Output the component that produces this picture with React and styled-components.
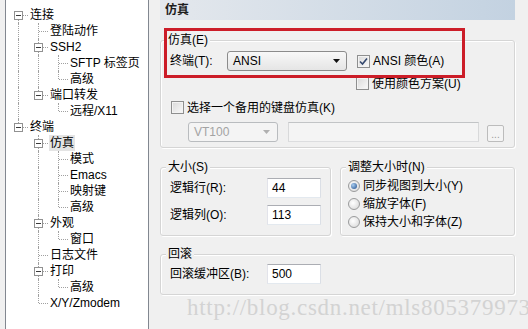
import React from 'react';
import styled, { createGlobalStyle } from 'styled-components';

const GlobalStyle = createGlobalStyle`
  html, body { margin: 0; padding: 0; background: #f0f0f0; }
  body {
    font-family: "Liberation Sans", "Noto Sans CJK SC", sans-serif;
    font-size: 12px;
    color: #000;
  }
  * { box-sizing: border-box; }
`;

const Window = styled.div`
  position: relative;
  width: 528px;
  height: 329px;
  overflow: hidden;
  display: flex;
  align-items: flex-start;
  background: #f0f0f0;
`;

/* ---------- tree ---------- */
const TreePanel = styled.div`
  margin-left: 5px;
  width: 144px;
  height: 340px;
  flex: none;
  background: #fff;
  border-left: 1px solid #828790;
  border-right: 1px solid #828790;
  padding: 7px 0 0 2px;
`;

const TreeRow = styled.div`
  display: flex;
  align-items: center;
  height: 16px;
  white-space: nowrap;
`;

const Cell = styled.span`
  position: relative;
  width: 20px;
  height: 16px;
  flex: none;
  &::before {
    content: '';
    position: absolute;
    left: 10px;
    top: ${p => (p.$up ? '0' : '8px')};
    bottom: ${p => (p.$down ? '0' : '8px')};
    border-left: ${p => (p.$up || p.$down ? '1px dotted #a0a0a0' : 'none')};
  }
  &::after {
    content: '';
    position: absolute;
    left: 11px;
    right: 0;
    top: 8px;
    border-top: ${p => (p.$h ? '1px dotted #a0a0a0' : 'none')};
  }
`;

const Expander = styled.svg`
  position: absolute;
  left: 6px;
  top: 4px;
  z-index: 1;
`;

const NodeLabel = styled.span`
  margin-left: 1px;
  padding: 0 1px;
  height: 16px;
  line-height: 16px;
  background: ${p => (p.$sel ? '#e4e4e4' : 'transparent')};
`;

/* ---------- right side ---------- */
const Main = styled.div`
  margin-left: 11px;
  width: 355px;
  flex: none;
  display: flex;
  flex-direction: column;
`;

const Header = styled.div`
  height: 20px;
  line-height: 20px;
  padding-left: 5px;
  font-weight: bold;
  color: #1e1e1e;
  background: linear-gradient(to right, #e4e8ed, #c3d2e1);
`;

const Group = styled.fieldset`
  margin: ${p => p.$mt || 0}px 0 0 0;
  padding: 0 0 0 5px;
  min-width: 0;
  border: 1px solid #d5d5d5;
  border-radius: 3px;
  box-shadow: inset 1px 1px 0 #fff, 1px 1px 0 #fff;
  flex: ${p => (p.$w ? `0 0 ${p.$w}px` : 'none')};
`;

const Legend = styled.legend`
  padding: 0 2px;
  line-height: 14px;
  background: #f0f0f0;
`;

const Body = styled.div`
  display: flex;
  flex-direction: column;
  padding: 0 0 ${p => p.$pb}px ${p => p.$pl}px;
`;

const Row = styled.div`
  display: flex;
  align-items: center;
  height: ${p => p.$h}px;
  margin-top: ${p => p.$mt || 0}px;
  margin-left: ${p => p.$ml || 0}px;
`;

const FieldLabel = styled.span`
  width: ${p => p.$w}px;
  flex: none;
  line-height: 14px;
`;

const Combo = styled.div`
  width: ${p => p.$w}px;
  height: 20px;
  flex: none;
  display: flex;
  align-items: center;
  justify-content: space-between;
  padding: 0 ${p => (p.$disabled ? 7 : 6)}px 0 5px;
  border: 1px solid ${p => (p.$disabled ? '#b9bcbf' : '#8b8b8b')};
  border-radius: 3px;
  background: ${p => (p.$disabled ? '#f4f4f4' : 'linear-gradient(#f8f8f8, #e5e5e5)')};
  color: ${p => (p.$disabled ? '#a3a3a3' : '#000')};
  line-height: 14px;
`;

const TextBox = styled.div`
  width: ${p => p.$w}px;
  height: 20px;
  flex: none;
  margin-left: ${p => p.$ml || 0}px;
  padding-left: 4px;
  line-height: 18px;
  border: 1px solid;
  border-color: ${p => (p.$disabled ? '#c2c4c6 #d8d9da #dcdddf #d8d9da' : '#abadb3 #dbdfe6 #e3e9ef #e2e3ea')};
  background: ${p => (p.$disabled ? '#f4f4f4' : '#fff')};
`;

const DotButton = styled.div`
  width: 17px;
  height: 17px;
  flex: none;
  align-self: flex-end;
  margin-left: 8px;
  border: 1px solid #bcbcbc;
  border-radius: 2px;
  background: #f4f4f4;
  color: #9a9a9a;
  font-size: 10px;
  line-height: 12px;
  display: flex;
  align-items: flex-end;
  justify-content: center;
`;

const CheckWrap = styled.label`
  display: flex;
  align-items: center;
  gap: 3px;
  margin-left: ${p => p.$ml || 0}px;
  line-height: 14px;
`;

const Box = styled.span`
  width: 13px;
  height: 13px;
  flex: none;
  border: 1px solid #8e8f8f;
  background: linear-gradient(135deg, #d9d9d9, #fafafa);
  box-shadow: inset 0 0 0 1px #f3f3f3;
  display: flex;
  align-items: center;
  justify-content: center;
`;

const RadioWrap = styled.label`
  display: flex;
  align-items: center;
  gap: 3px;
  height: 13px;
  margin-top: ${p => p.$mt}px;
  line-height: 14px;
`;

const RadioDot = styled.span`
  width: 12px;
  height: 12px;
  flex: none;
  border-radius: 50%;
  border: 1px solid #9a9b9c;
  background: radial-gradient(circle at 40% 40%, #ffffff, #d4d4d4);
  display: flex;
  align-items: center;
  justify-content: center;
  &::after {
    content: '';
    width: 6px;
    height: 6px;
    border-radius: 50%;
    background: ${p => (p.$on ? 'radial-gradient(circle at 35% 35%, #a9cdf0, #1d4b8a)' : 'transparent')};
  }
`;

const SplitRow = styled.div`
  display: flex;
  gap: 9px;
  margin-top: 12px;
`;

const Highlight = styled.div`
  position: absolute;
  left: 164px;
  top: 28px;
  width: 301px;
  height: 50px;
  border: 3px solid #cc1d28;
  pointer-events: none;
`;

const Watermark = styled.div`
  position: absolute;
  left: 187px;
  top: 297px;
  font-family: "Liberation Serif", serif;
  font-size: 23px;
  line-height: 22px;
  letter-spacing: 0.7px;
  color: #d3d3d3;
  white-space: nowrap;
  pointer-events: none;
`;

/* ---------- data ---------- */
const tree = [
  {
    t: '连接',
    c: [
      { t: '登陆动作' },
      { t: 'SSH2', c: [{ t: 'SFTP 标签页' }, { t: '高级' }] },
      { t: '端口转发', c: [{ t: '远程/X11' }] },
    ],
  },
  {
    t: '终端',
    c: [
      { t: '仿真', sel: true, c: [{ t: '模式' }, { t: 'Emacs' }, { t: '映射键' }, { t: '高级' }] },
      { t: '外观', c: [{ t: '窗口' }] },
      { t: '日志文件' },
      { t: '打印', c: [{ t: '高级' }] },
      { t: 'X/Y/Zmodem' },
    ],
  },
];

function flatten(nodes, ancestors, isRoot, out) {
  nodes.forEach((n, i) => {
    const hasNext = i < nodes.length - 1;
    out.push({
      node: n,
      ancestors,
      up: !(isRoot && i === 0),
      down: hasNext,
    });
    if (n.c) flatten(n.c, [...ancestors, hasNext], false, out);
  });
  return out;
}

const rows = flatten(tree, [], true, []);

const MinusBox = () => (
  <Expander width="9" height="9" viewBox="0 0 9 9">
    <rect x="0.5" y="0.5" width="8" height="8" fill="#fff" stroke="#919191" />
    <line x1="2" y1="4.5" x2="7" y2="4.5" stroke="#3a3a3a" />
  </Expander>
);

const Arrow = ({ color }) => (
  <svg width="7" height="4" viewBox="0 0 7 4">
    <path d="M0 0 L7 0 L3.5 4 Z" fill={color} />
  </svg>
);

const Check = ({ checked, ml, children }) => (
  <CheckWrap $ml={ml}>
    <Box>
      {checked && (
        <svg width="9" height="9" viewBox="0 0 9 9">
          <path d="M1 4.5 L3.5 7 L8 1.5" fill="none" stroke="#34486e" strokeWidth="1.6" />
        </svg>
      )}
    </Box>
    <span>{children}</span>
  </CheckWrap>
);

const Radio = ({ on, mt, children }) => (
  <RadioWrap $mt={mt}>
    <RadioDot $on={on} />
    <span>{children}</span>
  </RadioWrap>
);

export default function App() {
  return (
    <>
      <GlobalStyle />
      <Window>
        <TreePanel>
          {rows.map((r, i) => (
            <TreeRow key={i}>
              {r.ancestors.map((a, j) => (
                <Cell key={j} $up={a} $down={a} />
              ))}
              <Cell $up={r.up} $down={r.down} $h>
                {r.node.c && <MinusBox />}
              </Cell>
              <NodeLabel $sel={r.node.sel}>{r.node.t}</NodeLabel>
            </TreeRow>
          ))}
        </TreePanel>

        <Main>
          <Header>仿真</Header>

          <Group $mt={13}>
            <Legend>仿真(E)</Legend>
            <Body $pl={4} $pb={5}>
              <Row $h={20} $mt={4}>
                <FieldLabel $w={57}>终端(T):</FieldLabel>
                <Combo $w={120}>
                  <span>ANSI</span>
                  <Arrow color="#111" />
                </Combo>
                <Check checked ml={10}>ANSI 颜色(A)</Check>
              </Row>
              <Row $h={13} $mt={6} $ml={186}>
                <Check>使用颜色方案(U)</Check>
              </Row>
              <Row $h={13} $mt={11} $ml={1}>
                <Check>选择一个备用的键盘仿真(K)</Check>
              </Row>
              <Row $h={20} $mt={8} $ml={18}>
                <Combo $w={90} $disabled>
                  <span>VT100</span>
                  <Arrow color="#b0b0b0" />
                </Combo>
                <TextBox $w={191} $ml={10} $disabled />
                <DotButton>...</DotButton>
              </Row>
            </Body>
          </Group>

          <SplitRow>
            <Group $w={171}>
              <Legend>大小(S)</Legend>
              <Body $pl={4} $pb={10}>
                <Row $h={20} $mt={4}>
                  <FieldLabel $w={97}>逻辑行(R):</FieldLabel>
                  <TextBox $w={54}>44</TextBox>
                </Row>
                <Row $h={20} $mt={7}>
                  <FieldLabel $w={97}>逻辑列(O):</FieldLabel>
                  <TextBox $w={54}>113</TextBox>
                </Row>
              </Body>
            </Group>
            <Group $w={175}>
              <Legend>调整大小时(N)</Legend>
              <Body $pl={2} $pb={0}>
                <Radio on mt={5}>同步视图到大小(Y)</Radio>
                <Radio mt={5}>缩放字体(F)</Radio>
                <Radio mt={5}>保持大小和字体(Z)</Radio>
              </Body>
            </Group>
          </SplitRow>

          <Group $mt={11}>
            <Legend>回滚</Legend>
            <Body $pl={4} $pb={10}>
              <Row $h={20} $mt={3}>
                <FieldLabel $w={97}>回滚缓冲区(B):</FieldLabel>
                <TextBox $w={54}>500</TextBox>
              </Row>
            </Body>
          </Group>
        </Main>

        <Highlight />
        <Watermark>http://blog.csdn.net/mls805379973</Watermark>
      </Window>
    </>
  );
}
